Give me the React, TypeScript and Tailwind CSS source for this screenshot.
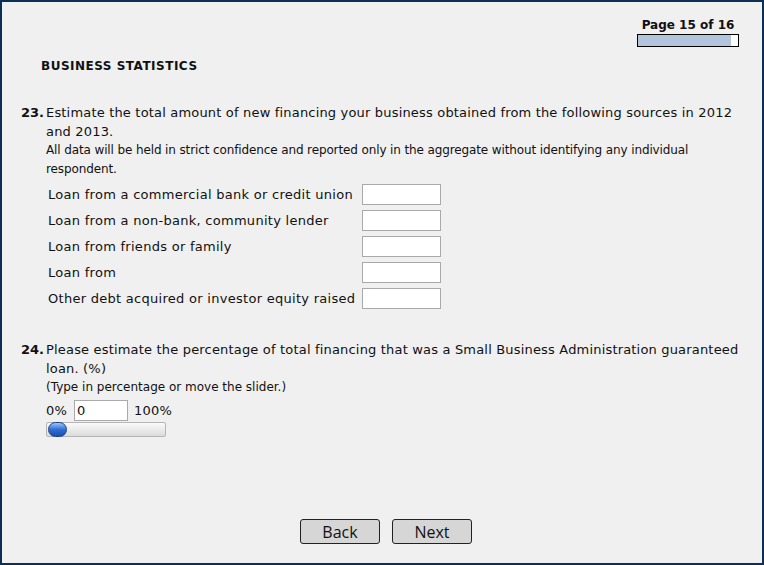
const rows = [
  "Loan from a commercial bank or credit union",
  "Loan from a non-bank, community lender",
  "Loan from friends or family",
  "Loan from",
  "Other debt acquired or investor equity raised",
];

function TextBox({ className = "" }: { className?: string }) {
  return (
    <div
      className={`h-[21px] border border-[#a9a9a9] bg-white ${className}`}
    />
  );
}

export default function App() {
  return (
    <div
      className="flex h-[565px] w-[764px] flex-col border-2 border-[#0d2f55] bg-[#f0f0f0] text-[#111]"
      style={{ fontFamily: '"DejaVu Sans", Verdana, sans-serif' }}
    >
      {/* page counter */}
      <div className="flex justify-end pr-[23px] pt-[15px]">
        <div className="w-[102px]">
          <p className="text-center text-[12px] font-bold leading-[16px]">
            Page 15 of 16
          </p>
          <div className="mt-[1px] flex h-[13px] border border-black bg-white">
            <div className="w-[93px] bg-[#b3c5dc]" />
          </div>
        </div>
      </div>

      <h2 className="ml-[39px] mt-[11px] text-[12px] font-bold leading-[16px] tracking-[0.5px]">
        BUSINESS STATISTICS
      </h2>

      {/* question 23 */}
      <section className="ml-[19px] mr-[22px] mt-[29px] flex">
        <span className="w-[25px] shrink-0 text-[13px] font-bold leading-[19px]">
          23.
        </span>
        <div className="flex-1">
          <p className="text-[13px] leading-[19px] tracking-[0.18px]">
            Estimate the total amount of new financing your business obtained
            from the following sources in 2012 and 2013.
          </p>
          <p className="text-[12px] leading-[19px] tracking-[-0.12px]">
            All data will be held in strict confidence and reported only in the
            aggregate without identifying any individual respondent.
          </p>
          <div className="ml-[2px] mt-[5px] flex flex-col gap-[5px]">
            {rows.map((r) => (
              <div key={r} className="flex items-center">
                <span className="w-[314px] text-[13px] leading-[21px] tracking-[0.28px]">
                  {r}
                </span>
                <TextBox className="w-[79px]" />
              </div>
            ))}
          </div>
        </div>
      </section>

      {/* question 24 */}
      <section className="ml-[19px] mr-[22px] mt-[31px] flex">
        <span className="w-[25px] shrink-0 text-[13px] font-bold leading-[19px]">
          24.
        </span>
        <div className="flex-1">
          <p className="text-[13px] leading-[19px] tracking-[0.18px]">
            Please estimate the percentage of total financing that was a Small
            Business Administration guaranteed loan. (%)
          </p>
          <p className="text-[12px] leading-[19px]">
            (Type in percentage or move the slider.)
          </p>
          <div className="mt-[3px] flex items-center gap-[6px] text-[13px] tracking-[0.2px]">
            <span className="mr-[1px]">0%</span>
            <div className="flex h-[21px] w-[54px] items-center border border-[#a9a9a9] bg-white pl-[2px]">
              0
            </div>
            <span>100%</span>
          </div>
          <div className="relative mt-[1px] h-[15px] w-[120px] rounded-[2px] border border-[#b5b5b5] bg-gradient-to-b from-[#fafafa] to-[#dcdcdc]">
            <div className="absolute left-[1px] top-[-1px] h-[15px] w-[19px] rounded-full border border-[#1b3f84] bg-gradient-to-b from-[#9cc4f5] via-[#2d6fd6] to-[#1d4fae]" />
          </div>
        </div>
      </section>

      <div className="flex-1" />

      <div
        className="mb-[19px] flex justify-center gap-[12px] pl-[8px]"
        style={{ fontFamily: '"Open Sans", "Noto Sans", sans-serif' }}
      >
        {["Back", "Next"].map((b) => (
          <button
            key={b}
            className="h-[25px] w-[80px] rounded-[3px] border border-[#222] bg-[#d6d6d6] text-[16px] leading-[22px] text-[#111]"
          >
            {b}
          </button>
        ))}
      </div>
    </div>
  );
}
